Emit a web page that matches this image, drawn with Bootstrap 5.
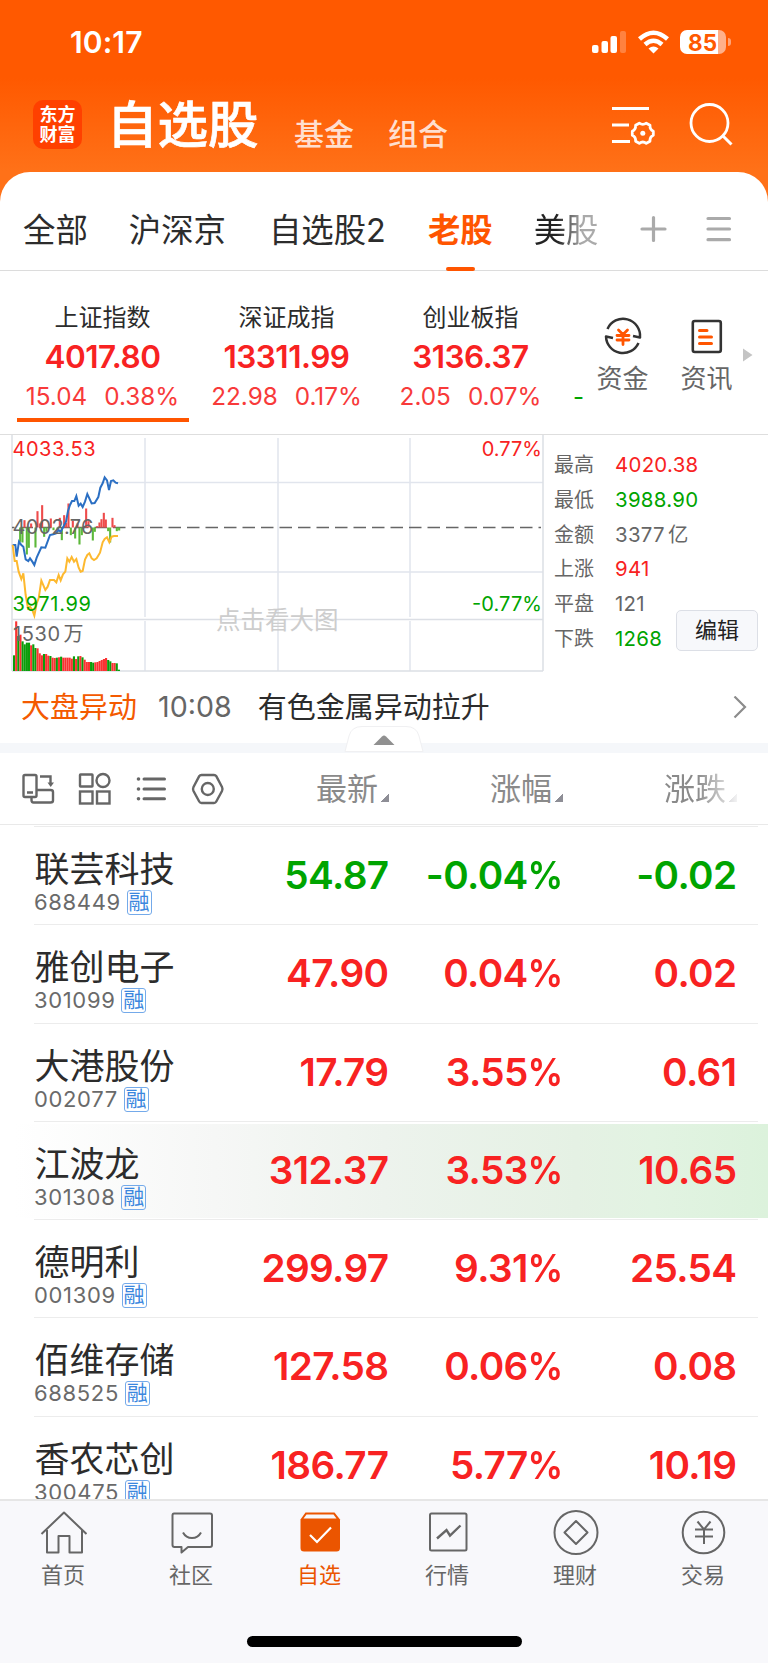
<!DOCTYPE html>
<html lang="zh-CN">
<head>
<meta charset="utf-8">
<meta name="viewport" content="width=device-width, initial-scale=1">
<title>自选股</title>
<link href="https://cdn.jsdelivr.net/npm/bootstrap@5.3.0/dist/css/bootstrap.min.css" rel="stylesheet">
<style>
  :root { --up:#f82222; --down:#00a400; --brand:#ff5500; }
  body { font-family: Inter, "Noto Sans CJK SC", sans-serif; color:#2c2c2c; background:#fff; width:768px; height:1663px; overflow:hidden; line-height:1; }
  svg { display:block; flex:none; }
  .up { color:var(--up); } .down { color:var(--down); } .muted { color:#666; }
  .app { height:1663px; }
  .hero { height:202px; margin-bottom:-30px; background:linear-gradient(#ff5900 0,#ff5900 78px,#ff7118 171px); color:#fff; }
  .status { height:84px; padding:0 37px 0 70px; }
  .clock { font-size:30px; font-weight:600; letter-spacing:.1px; }
  .batt { width:46px; height:24px; border-radius:7px; background:linear-gradient(90deg,#fff 38px,#ffb08a 38px); color:#ff5900; font-size:22.5px; font-weight:700; line-height:25px; padding-left:8px; }
  .nub { width:3px; height:8px; border-radius:0 4px 4px 0; background:#ffa377; margin-left:2px; }
  .titles { height:87px; padding:0 35px 0 33px; }
  .logo { width:49px; height:49px; margin-top:16px; border-radius:10px; background:#ff4000; font-size:18px; font-weight:700; line-height:20px; text-align:center; padding-top:5px; }
  .t1 { font-size:50.5px; font-weight:500; line-height:50px; margin:16px 0 0 25px; width:152px; white-space:nowrap; -webkit-text-stroke:.7px #fff; }
  .t2 { font-size:30px; font-weight:500; line-height:32px; margin-top:34px; color:#ffdfcf; }
  .sheet { background:#fff; border-radius:30px 30px 0 0; position:relative; }
  .tabs { height:99px; border-bottom:1px solid #dcdcdc; padding:0 36px 0 23px; font-size:32.4px; }
  .tabs > span { white-space:nowrap; line-height:40px; margin-top:39px; }
  .tab-on { color:var(--brand); font-weight:700; position:relative; }
  .tab-on::after { content:""; position:absolute; left:18px; top:56px; width:29px; height:4px; border-radius:2px; background:var(--brand); }
  .fade-x { background:linear-gradient(90deg,#222 35%,#aaa 75%); -webkit-background-clip:text; background-clip:text; color:transparent; }
  .indices { height:163px; }
  .idx { width:184px; padding-top:34px; text-align:center; white-space:nowrap; }
  .idx .nm { font-size:24px; line-height:26px; }
  .idx .vl { font-size:31.5px; font-weight:600; line-height:34px; margin-top:9px; letter-spacing:-.5px; color:var(--up); }
  .idx .ch { font-size:24.3px; line-height:28px; margin-top:8px; color:#f83a3a; gap:17px; }
  .idx-on .bar { width:172px; height:4px; margin:8px auto 0; background:var(--brand); }
  .tool { width:84px; padding-top:45px; font-size:26px; color:#666; }
  .tool span { line-height:30px; margin-top:8px; margin-right:1px; }
  .market { height:238px; border-top:1px solid #dedede; }
  .stats { font-size:20px; padding:13px 0 0 10px; width:225px; position:relative; }
  .stats div { height:34.8px; line-height:34.8px; white-space:nowrap; }
  .stats span { display:inline-block; width:61px; color:#666; }
  .stats b { font-size:20.4px; letter-spacing:.3px; }
  .edit { position:absolute; left:132px; top:175px; width:82px; height:41px; border:1px solid #dcdfe6; border-radius:5px; background:#f7f8fb; color:#222; font-size:22px; line-height:39px; padding:0; text-align:center; }
  .news { height:71px; padding:0 21px; font-size:29px; white-space:nowrap; }
  .band { height:10px; background:#f5f7fa; position:relative; }
  .band svg { position:absolute; left:344px; top:-18px; }
  .cols { height:72px; border-bottom:1px solid #e9e9e9; padding-left:22px; font-size:31px; color:#8a8a8a; }
  .cols .hd { white-space:nowrap; }
  .tri { display:inline-block; width:8px; height:8px; background:linear-gradient(135deg,transparent 50%,#8e8e96 50%); margin-left:3px; position:relative; top:2px; }
  .rows { height:674px; overflow:hidden; padding-top:1px; }
  .stock { height:98.25px; padding:3px 0 2px; }
  .stock::before { content:""; display:block; height:1px; background:#ececec; margin:-3px 10px 2px 34px; }
  .stock .inner { height:94.5px; padding-left:34px; }
  .hot .inner { background:linear-gradient(90deg,#fff 2%,#f6f7f6 28%,#edf3ed 50%,#e5f1e4 75%,#e2f3e2 85%,#dcf2dc); }
  .stock .nm { font-size:35px; line-height:38px; padding-top:21px; width:180px; white-space:nowrap; margin-left:.5px; }
  .stock .cd { font-size:22px; line-height:24px; color:#6a6a6a; letter-spacing:.65px; margin-top:1px; }
  .rz { width:25px; height:25px; border:1.5px solid #74aaea; border-radius:3px; color:#3b87de; font-size:21px; line-height:21px; text-align:center; letter-spacing:0; margin:1px 0 0 6px; text-indent:-.5px; }
  .num { font-size:38.7px; font-weight:600; line-height:44px; letter-spacing:-.6px; text-align:right; margin-top:24px; width:174px; white-space:nowrap; }
  .pc { display:inline-block; transform:scaleX(.92); margin:0 -2px 0 -1.5px; }
  .dock { height:164px; background:#f8f8fb; border-top:2px solid #e6e6e6; color:#666; font-size:22px; position:relative; }
  .dock .it { width:128px; padding-top:9px; }
  .dock .it span { line-height:26px; margin:4px 2px 0 0; }
  .dock .on { color:#eb5500; }
  .grip { position:absolute; left:247px; top:135px; width:275px; height:11px; border-radius:6px; background:#000; }
</style>
</head>
<body>
<div class="app d-flex flex-column">
  <header class="hero flex-shrink-0">
    <div class="status d-flex align-items-center justify-content-between">
      <span class="clock">10:17</span>
      <div class="d-flex align-items-center">
        <svg width="36" height="24" viewBox="0 0 36 24" fill="#fff"><rect x="1" y="15" width="6.500" height="8" rx="2"/><rect x="10.500" y="11" width="6.500" height="12" rx="2"/><rect x="19.500" y="6" width="6.500" height="17" rx="2"/><rect x="29" y="1" width="6" height="22" rx="2" opacity=".25"/></svg>
        <svg style="margin:0 11px 0 11px" width="31" height="24" viewBox="0 0 31 24" fill="none" stroke="#fff" stroke-width="4.500"><path d="M1.500 9Q15.500-3.500 29.500 9"/><path d="M7 14.500Q15.500 7 24 14.500"/><path d="M15.500 23.500L10.500 18.500Q15.500 14.500 20.500 18.500Z" fill="#fff" stroke="none"/></svg>
        <div class="batt">85</div><div class="nub"></div>
      </div>
    </div>
    <div class="titles d-flex">
      <div class="logo">东方<br>财富</div>
      <div class="t1">自选股</div>
      <div class="t2" style="margin-left:35px">基金</div>
      <div class="t2" style="margin-left:34px">组合</div>
      <svg class="ms-auto" style="margin-top:21px" width="45" height="42" viewBox="0 0 45 42" fill="none" stroke="#fff" stroke-width="2.800"><path d="M1 3.500H38M1 20H18M1 36.500H19"/><path d="M28.300 18.200Q31.800 20.600 35.300 18.200L39 20.300Q38.700 24.300 42.300 26.300V30.300Q38.700 32 39 36.200L35.300 38.300Q31.800 35.800 28.300 38.300L24.600 36.200Q24.900 32 21.300 30.300V26.300Q24.900 24.300 24.600 20.300Z" stroke-linejoin="round"/><circle cx="31.800" cy="28.200" r="2.500" fill="#fff" stroke="none"/></svg>
      <svg style="margin:18px 0 0 33px" width="44" height="46" viewBox="0 0 44 46" fill="none" stroke="#fff" stroke-width="2.800"><circle cx="20.500" cy="21" r="18.500"/><path d="M33.500 33.500L42.500 42.500" stroke-width="3"/></svg>
    </div>
  </header>

  <main class="sheet flex-grow-1">
    <nav class="tabs d-flex">
      <span>全部</span><span style="margin-left:41px">沪深京</span><span style="margin-left:43px">自选股2</span>
      <span class="tab-on" style="margin-left:42px">老股</span><span class="fade-x" style="margin-left:41px">美股</span>
      <svg class="ms-auto align-self-center" style="margin-top:16px" width="92" height="28" viewBox="0 0 92 28" stroke="#aaa" stroke-width="3.200" stroke-linecap="round"><path d="M2 14H25M13.500 2.500V25.500M68 3.500H89.500M68 14H89.500M68 24.700H89.500"/></svg>
    </nav>

    <section class="indices d-flex">
      <div style="width:10.5px"></div>
      <div class="idx idx-on"><div class="nm">上证指数</div><div class="vl">4017.80</div><div class="ch d-flex justify-content-center"><span>15.04</span><span>0.38%</span></div><div class="bar"></div></div>
      <div class="idx"><div class="nm">深证成指</div><div class="vl">13311.99</div><div class="ch d-flex justify-content-center"><span>22.98</span><span>0.17%</span></div></div>
      <div class="idx"><div class="nm">创业板指</div><div class="vl">3136.37</div><div class="ch d-flex justify-content-center"><span>2.05</span><span>0.07%</span></div></div>
      <div class="down" style="width:18.5px;padding:114px 0 0 10.5px;font-size:24px">-</div>
      <div class="tool d-flex flex-column align-items-center">
        <svg width="40" height="40" viewBox="0 0 40 40" fill="none" stroke="#333" stroke-width="2.500" stroke-linejoin="round"><path d="M4.500 13A17 17 0 0 1 37 21.500L30 20M35.500 27A17 17 0 0 1 3 20.500L10 22"/><path d="M15.500 14L20 18.500L24.500 14M14 19.500H26M14 24H26M20 19V28.500" stroke="#ff5500" stroke-width="2.800" stroke-linecap="round"/></svg>
        <span>资金</span>
      </div>
      <div class="tool d-flex flex-column align-items-center">
        <svg width="40" height="40" viewBox="0 0 40 40" fill="none" stroke="#333" stroke-width="2.600"><rect x="5.800" y="5" width="28" height="31" rx="2"/><path d="M12.500 14.500H20M12.500 21H24.500M12.500 27.500H24.500" stroke="#ff5500" stroke-width="3" stroke-linecap="round"/></svg>
        <span>资讯</span>
      </div>
      <svg style="margin:77px 0 0 -7px" width="11" height="14" viewBox="0 0 11 14"><path d="M1 .5L10.500 7L1 13.500Z" fill="#c4c4c4"/></svg>
    </section>

    <section class="market d-flex">
      <svg id="chart" width="544" height="237" viewBox="0 435 544 237" font-family='Inter,"Noto Sans CJK SC",sans-serif' font-size="20">
        <g stroke="#e1e5ed" stroke-width="1.500" fill="none"><path d="M145 438V617M278 438V617M410 438V617M145 621V671M278 621V671M410 621V671M12 482.500H543M12 572H543"/><path d="M12 435V671M12 619.500H543M12 671H543M543 435V671" stroke="#dcdfe5"/></g>
        <path d="M12 527.500H541" stroke="#666" stroke-width="1.400" stroke-dasharray="12.500 6" stroke-dashoffset="10"/>
        <g id="vol"></g><g id="mid"></g>
        <g transform="translate(0 425) scale(.33333)" fill="none" stroke-width="6">
          <polyline stroke="#2b6fc3" points="38,360 46,360 50,395 57,350 64,360 70,365 77,403 85,408 90,400 97,410 103,420 110,398 124,367 136,368 150,330 160,328 168,325 175,315 182,320 190,305 198,290 204,258 210,240 216,228 223,228 229,213 236,242 242,236 248,246 255,230 262,207 275,235 284,234 295,216 301,188 308,175 314,157 321,166 327,195 333,168 340,166 347,173 354,175"/>
          <polyline stroke="#fdb92f" points="38,360 44,408 50,408 56,440 64,462 70,445 77,510 84,550 90,545 97,555 103,572 110,535 116,520 124,467 136,495 143,485 150,465 162,465 169,472 176,450 182,466 189,448 196,440 202,400 208,410 215,396 222,410 229,402 236,428 242,440 248,438 255,404 262,390 268,385 275,400 282,405 290,400 300,383 308,352 314,342 321,337 328,352 335,335 342,333 354,333"/>
        </g>
        <text x="12.500" y="456" fill="#f82222" textLength="83">4033.53</text>
        <text x="12.500" y="534" fill="#666" textLength="81">4002.76</text>
        <text x="12.500" y="611" fill="#00a400" textLength="78.500">3971.99</text>
        <text x="13" y="640.500" fill="#666" textLength="47">1530</text><text x="63.500" y="641" fill="#666">万</text>
        <text x="542" y="456" fill="#f82222" text-anchor="end">0.77%</text>
        <text x="542" y="611" fill="#00a400" text-anchor="end" textLength="70">-0.77%</text>
        <text x="216" y="629" fill="#cdcdcd" font-size="24.500">点击看大图</text>
      </svg>
      <div class="stats">
        <div><span>最高</span><b class="up fw-normal">4020.38</b></div>
        <div><span>最低</span><b class="down fw-normal">3988.90</b></div>
        <div><span>金额</span><b class="muted fw-normal">3377<i class="fst-normal" style="margin-left:3px">亿</i></b></div>
        <div><span>上涨</span><b class="up fw-normal">941</b></div>
        <div><span>平盘</span><b class="muted fw-normal">121</b></div>
        <div><span>下跌</span><b class="down fw-normal">1268</b></div>
        <button class="edit" type="button">编辑</button>
      </div>
    </section>

    <section class="news d-flex align-items-center">
      <span style="color:#f45a00">大盘异动</span><span class="muted" style="margin-left:21px;font-size:28.6px">10:08</span><span style="margin-left:26px">有色金属异动拉升</span>
      <svg class="ms-auto" width="14" height="24" viewBox="0 0 14 24" fill="none" stroke="#8c8c8c" stroke-width="2.200"><path d="M1.500 .5L12 11L1.500 21.500"/></svg>
    </section>
    <div class="band"><svg width="80" height="29" viewBox="0 0 80 29"><path d="M1 26.500L5 11Q7.500 1.500 18 1.500H62Q72.500 1.500 75 11L79 26.500Z" fill="#fff" stroke="#f0f0f2"/><path d="M29.500 20L38 11.500Q40 9.500 42 11.500L50.500 20Z" fill="#909090"/></svg></div>

    <section class="cols d-flex align-items-center">
      <svg width="204" height="34" viewBox="22 772 204 34" fill="none" stroke="#666" stroke-width="2.400">
        <rect x="23.500" y="775" width="13" height="22" rx="1.500"/><path d="M27 792.500H33M40 776.500H50.500V784M37 790H50.500Q53 790 53 792V800.500Q53 802.500 50.500 802.500H33.500Q31.500 802.500 31.500 800V797"/><path d="M47.500 782.500H54L50.700 787Z" fill="#666" stroke="none"/>
        <rect x="80" y="774.500" width="12.500" height="12" rx=".5"/><circle cx="103" cy="780.500" r="6.500"/><rect x="80" y="791.500" width="12.500" height="12"/><rect x="97" y="791.500" width="12.500" height="12"/>
        <path d="M144 779H164.500M144 789H164.500M144 798.700H164.500" stroke-width="3" stroke-linecap="round"/><g fill="#666" stroke="none"><circle cx="138.500" cy="779" r="1.800"/><circle cx="138.500" cy="789" r="1.800"/><circle cx="138.500" cy="798.700" r="1.800"/></g>
        <path d="M201.500 775H214Q215.500 775 216.300 776.200L222 787Q223 789 222 791L216.300 801.500Q215.500 803 214 803H201.500Q200 803 199.200 801.500L193.500 791Q192.500 789 193.500 787L199.200 776.200Q200 775 201.500 775Z"/><circle cx="207.800" cy="789" r="6"/>
      </svg>
      <div class="hd text-end" style="width:163px">最新<i class="tri"></i></div>
      <div class="hd text-end" style="width:174px">涨幅<i class="tri"></i></div>
      <div class="hd text-end" style="width:174px;-webkit-mask-image:linear-gradient(90deg,#000 77%,transparent 103%)">涨跌<i class="tri"></i></div>
    </section>

    <section class="rows" id="rows"></section>
  </main>

  <footer class="dock flex-shrink-0 d-flex align-items-start">
    <div class="it d-flex flex-column align-items-center"><svg width="48" height="48" viewBox="0 0 48 48" fill="none" stroke="#666" stroke-width="2" stroke-linejoin="round"><path d="M1.500 24L24 2.500L46.500 24M7 20V42.500H18.500V26H29.500V42.500H42V20"/></svg><span>首页</span></div>
    <div class="it d-flex flex-column align-items-center"><svg width="48" height="48" viewBox="0 0 48 48" fill="none" stroke="#666" stroke-width="2" stroke-linejoin="round"><path d="M6 3.500H42Q44 3.500 44 5.500V35Q44 37 42 37H20L13.500 42.500V37H6.500Q4.500 37 4.500 35V5.500Q4.500 3.500 6 3.500ZM15 22.500Q18 28 24 28T33 22.500"/></svg><span>社区</span></div>
    <div class="it on d-flex flex-column align-items-center"><svg width="48" height="48" viewBox="0 0 48 48"><path d="M9.500 2.500H38.500L44 9.500V38Q44 41.500 40.500 41.500H8Q4.500 41.500 4.500 38V9.500Z" fill="#eb5500"/><path d="M10.500 4.500H37.500L40.500 8.500H7.500Z" fill="#f8f8fb"/><path d="M14 25L21 32L35 17.500" fill="none" stroke="#fff" stroke-width="2.200"/></svg><span>自选</span></div>
    <div class="it d-flex flex-column align-items-center"><svg width="48" height="48" viewBox="0 0 48 48" fill="none" stroke="#666" stroke-width="2"><rect x="6" y="3.500" width="36.500" height="37" rx="1.500"/><path d="M13 28.500L22.500 20L26 25.500L36.500 15.500" stroke-width="2.400"/></svg><span>行情</span></div>
    <div class="it d-flex flex-column align-items-center"><svg width="48" height="48" viewBox="0 0 48 48" fill="none" stroke="#666" stroke-width="2" stroke-linejoin="round"><circle cx="24" cy="22.500" r="21.500"/><path d="M24 11L35.500 22.500L24 34L12.500 22.500Z"/></svg><span>理财</span></div>
    <div class="it d-flex flex-column align-items-center"><svg width="48" height="48" viewBox="0 0 48 48" fill="none" stroke="#666" stroke-width="2"><circle cx="23.500" cy="22.500" r="20.800"/><path d="M17.500 11.500L24 19.500L30.500 11.500M15 19.500H33M15 26.500H33M24 19.500V34"/></svg><span>交易</span></div>
    <div class="grip"></div>
  </footer>
</div>
<script src="https://cdn.jsdelivr.net/npm/bootstrap@5.3.0/dist/js/bootstrap.bundle.min.js"></script>
<script>
  const stocks = [
    ['联芸科技','688449','54.87','-0.04%','-0.02'],
    ['雅创电子','301099','47.90','0.04%','0.02'],
    ['大港股份','002077','17.79','3.55%','0.61'],
    ['江波龙','301308','312.37','3.53%','10.65'],
    ['德明利','001309','299.97','9.31%','25.54'],
    ['佰维存储','688525','127.58','0.06%','0.08'],
    ['香农芯创','300475','186.77','5.77%','10.19']
  ];
  document.getElementById('rows').innerHTML = stocks.map((s, i) => {
    const c = s[3][0] === '-' ? 'down' : 'up';
    return `<div class="stock ${i === 3 ? 'hot' : ''}"><div class="inner d-flex"><div><div class="nm">${s[0]}</div><div class="cd d-flex align-items-center"><span>${s[1]}</span><span class="rz">融</span></div></div>` +
      s.slice(2).map(v => `<div class="num ${c}">${v.replace('%', '<span class="pc">%</span>')}</div>`).join('') + '</div></div>';
  }).join('');

  const rect = (x, y, h, f) => `<rect x="${x.toFixed(2)}" y="${y.toFixed(2)}" width="2.100" height="${h.toFixed(2)}" fill="${f}"/>`;
  // minute volumes: height and direction
  const vols = '47g 149r 105g 109r 89g 80g 85g 85g 77r 80g 69g 68r 53r 47r 51g 51r 46r 45g 40r 39r 40g 41r 43g 40r 40r 40r 40r 37r 44g 36r 44g 45r 41g 34r 27r 27r 27g 25g 26r 27r 30r 33r 36r 39r 33g 29g 24r 24r 23g 4g'.split(' ');
  document.getElementById('vol').innerHTML = vols.map((v, i) => {
    const h = parseInt(v) / 3;
    return rect(13 + i * 2.14, 671 - h, h, v.endsWith('r') ? '#fa3232' : '#0a9d0a');
  }).join('');
  // momentum bars around the previous close
  const mids = [[60,-43],[67,-45],[73,22],[80,-81],[86,-61],[93,12],[106,-60],[112,49],[119,12],[126,67],[132,-28],[139,-13],[152,27],[160,-8],[172,-13],[179,29],[185,-38],[192,37],[198,14],[205,72],[212,-23],[218,20],[225,-33],[232,12],[238,-51],[245,-23],[258,57],[265,19],[278,-39],[284,-13],[291,4],[298,15],[304,25],[311,44],[317,24],[324,-11],[330,-45],[337,29],[343,7],[350,-11],[357,-9]];
  document.getElementById('mid').innerHTML = mids.map(([x, v]) =>
    rect(x / 3 - .9, v > 0 ? 527.5 - v / 3 : 527.5, Math.abs(v) / 3, v > 0 ? '#ee4b4b' : '#5cb83a')).join('');
</script>
</body>
</html>
